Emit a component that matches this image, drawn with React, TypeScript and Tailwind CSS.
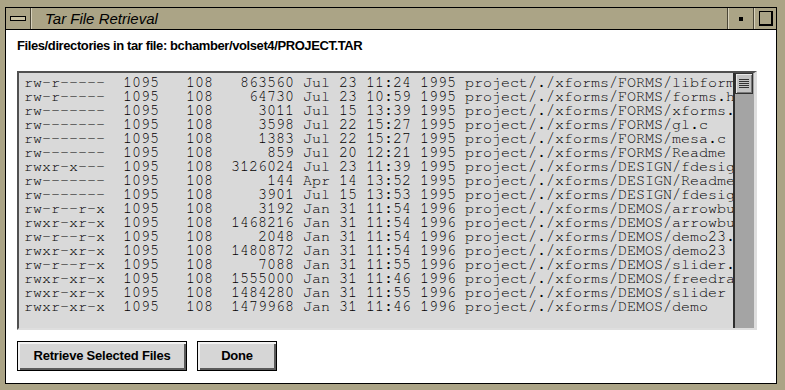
const rows: string[][] = [
  ['rw-r-----', '863560', 'Jul 23', '11:24', '1995', 'FORMS/libforms.a'],
  ['rw-r-----', '64730', 'Jul 23', '10:59', '1995', 'FORMS/forms.h'],
  ['rw-------', '3011', 'Jul 15', '13:39', '1995', 'FORMS/xforms.5'],
  ['rw-------', '3598', 'Jul 22', '15:27', '1995', 'FORMS/gl.c'],
  ['rw-------', '1383', 'Jul 22', '15:27', '1995', 'FORMS/mesa.c'],
  ['rw-------', '859', 'Jul 20', '12:21', '1995', 'FORMS/Readme'],
  ['rwxr-x---', '3126024', 'Jul 23', '11:39', '1995', 'DESIGN/fdesign'],
  ['rw-------', '144', 'Apr 14', '13:52', '1995', 'DESIGN/Readme'],
  ['rw-------', '3901', 'Jul 15', '13:53', '1995', 'DESIGN/fdesign.h'],
  ['rw-r--r-x', '3192', 'Jan 31', '11:54', '1996', 'DEMOS/arrowbutton.c'],
  ['rwxr-xr-x', '1468216', 'Jan 31', '11:54', '1996', 'DEMOS/arrowbutton'],
  ['rw-r--r-x', '2048', 'Jan 31', '11:54', '1996', 'DEMOS/demo23.c'],
  ['rwxr-xr-x', '1480872', 'Jan 31', '11:54', '1996', 'DEMOS/demo23'],
  ['rw-r--r-x', '7088', 'Jan 31', '11:55', '1996', 'DEMOS/slider.c'],
  ['rwxr-xr-x', '1555000', 'Jan 31', '11:46', '1996', 'DEMOS/freedraw'],
  ['rwxr-xr-x', '1484280', 'Jan 31', '11:55', '1996', 'DEMOS/slider'],
  ['rwxr-xr-x', '1479968', 'Jan 31', '11:46', '1996', 'DEMOS/demo'],
];

// ls -l style columns, fixed width
function line([perm, size, date, time, year, path]: string[]) {
  return perm.padEnd(11) + '1095'.padEnd(7) + '108' + size.padStart(9) + ' ' + date + ' ' + time + ' ' + year + ' project/./xforms/' + path;
}

function Sep() {
  return (
    <>
      <div className="w-px bg-[#4a4636]" />
      <div className="w-px bg-[#d8d2bc]" />
    </>
  );
}

export default function App() {
  return (
    <div className="w-[785px] h-[390px] bg-[#aba486] pl-[5px] pt-[7px] pr-[8px] pb-[6px] font-['Liberation_Sans',sans-serif] text-black overflow-hidden">
      <div className="h-full flex flex-col border border-black">
        {/* title bar */}
        <div className="h-[22px] flex bg-[#aba486] border-b border-black">
          <div className="w-[24px] flex items-center justify-center">
            <div className="w-[16px] h-[5px] border border-black bg-[#c9c2a4]" />
          </div>
          <Sep />
          <div className="flex-1 pl-[13px] flex items-center text-[15px] italic leading-none">Tar File Retrieval</div>
          <Sep />
          <div className="w-[24px] flex items-center justify-center">
            <div className="w-[4px] h-[4px] bg-black" />
          </div>
          <Sep />
          <div className="w-[21px] flex items-center justify-center">
            <div className="w-[14px] h-[15px] border-t border-l border-r-2 border-b-2 border-black" />
          </div>
        </div>

        {/* content */}
        <div className="flex-1 bg-white pl-[11px] pt-[8px]">
          <div className="h-[16px] leading-[16px] text-[13px] font-bold tracking-[-0.4px]">
            Files/directories in tar file: bchamber/volset4/PROJECT.TAR
          </div>

          <div className="mt-[17px] w-[740px] h-[259px] flex border-t-2 border-l-2 border-[#505050] border-r-[3px] border-r-[#dedede] border-b-2 border-b-[#dedede] bg-[#d9d9d9]">
            <div className="flex-1 overflow-hidden pl-[5px] pt-[3px] font-['Nimbus_Mono_PS','FreeMono','Courier_New','Liberation_Mono',monospace] text-[15px] leading-[14px] whitespace-pre">
              {rows.map((r) => (
                <div key={line(r)}>{line(r)}</div>
              ))}
            </div>
            <div className="w-[21px] border-l-2 border-[#2e2e2e] bg-[#a4a4a4]">
              <div className="w-[18px] h-[21px] border border-[#333] bg-[#c4c4c4] shadow-[inset_1px_1px_0_0_#e8e8e8,inset_-1px_-1px_0_0_#7a7a7a] flex flex-col items-center justify-center gap-[1px]">
                {[0, 1, 2, 3, 4].map((i) => (
                  <div key={i} className="w-[10px] h-px bg-[#333]" />
                ))}
              </div>
            </div>
          </div>

          <div className="mt-[11px] flex gap-[10px]">
            <button className="w-[170px] h-[30px] border border-black bg-[#d6d6d6] shadow-[inset_2px_2px_0_0_#f2f2f2,inset_-2px_-2px_0_0_#5a5a5a] text-[13px] font-bold tracking-[-0.2px]">
              Retrieve Selected Files
            </button>
            <button className="w-[80px] h-[30px] border border-black bg-[#d6d6d6] shadow-[inset_2px_2px_0_0_#f2f2f2,inset_-2px_-2px_0_0_#5a5a5a] text-[13px] font-bold tracking-[-0.2px]">
              Done
            </button>
          </div>
        </div>
      </div>
    </div>
  );
}
